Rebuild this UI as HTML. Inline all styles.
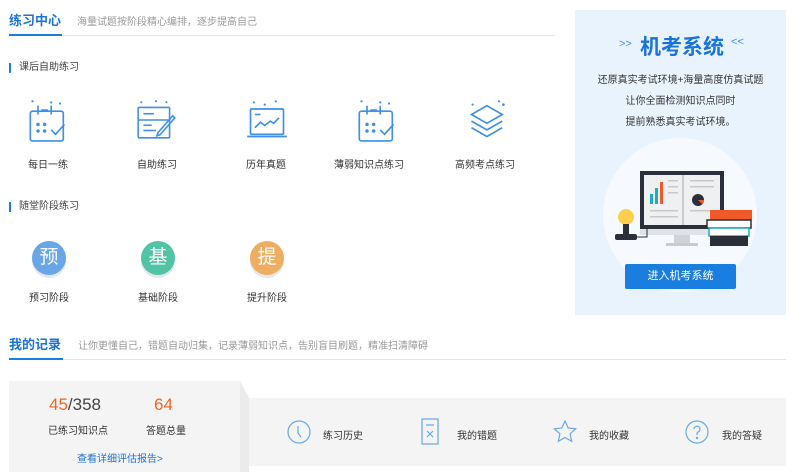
<!DOCTYPE html>
<html><head><meta charset="utf-8"><style>
*{margin:0;padding:0;box-sizing:border-box}
body{width:800px;height:472px;background:#fff;font-family:"Liberation Sans","Noto Sans CJK SC",sans-serif;position:relative;overflow:hidden;color:#333}
.a{position:absolute;white-space:nowrap}
.t{font-size:13px;font-weight:bold;color:#1a73d9}
.s{font-size:10px;color:#999}
.sec{font-size:10px;color:#444;padding-left:8px;border-left:2px solid #1a7de0;line-height:10px}
.lab{font-size:10px;color:#333;text-align:center;width:100px}
.circ{width:34px;height:34px;border-radius:50%;color:#fff;font-size:19px;text-align:center;line-height:34px;box-shadow:0 3px 0 #e4e8ee}
</style></head><body>
<div class="a t" style="left:9px;top:10px">练习中心</div>
<div class="a s" style="left:77px;top:13px">海量试题按阶段精心编排，逐步提高自己</div>
<div class="a" style="left:9px;top:35px;width:546px;height:1px;background:#e3e3e3"></div>
<div class="a" style="left:9px;top:34px;width:53px;height:2px;background:#1a7de0"></div>
<div class="a sec" style="left:9px;top:63px">课后自助练习</div>

<svg class="a" style="left:27px;top:98px" width="44" height="44" viewBox="0 0 40 40" fill="none" stroke="#3d8fe8" stroke-width="1.5">
<rect x="3" y="12" width="30" height="27" rx="2"/><line x1="10" y1="7" x2="10" y2="15"/><line x1="22" y1="7" x2="22" y2="15"/><line x1="13" y1="11" x2="19" y2="11"/>
<g fill="#3d8fe8" stroke="none"><circle cx="10" cy="24" r="1.6"/><circle cx="16" cy="24" r="1.6"/><circle cx="10" cy="30" r="1.6"/><circle cx="16" cy="30" r="1.6"/><circle cx="5" cy="3" r="1"/><circle cx="22" cy="4" r="1"/><circle cx="30" cy="5" r="1"/></g>
<path d="M22 29l4 4 8-9"/></svg>
<svg class="a" style="left:135px;top:98px" width="44" height="44" viewBox="0 0 42 40" fill="none" stroke="#3d8fe8" stroke-width="1.5">
<rect x="3" y="8" width="30" height="29" rx="1"/><line x1="3" y1="20" x2="33" y2="20"/><line x1="8" y1="14" x2="18" y2="14"/><line x1="8" y1="25" x2="16" y2="25"/><line x1="8" y1="30" x2="20" y2="30"/><path d="M22 32l14-16 2 2-14 16-3 1z"/>
<g fill="#3d8fe8" stroke="none"><circle cx="6" cy="3" r="1"/><circle cx="20" cy="2" r="1"/><circle cx="30" cy="3" r="1"/></g></svg>
<svg class="a" style="left:245px;top:98px" width="44" height="44" viewBox="0 0 40 40" fill="none" stroke="#3d8fe8" stroke-width="1.5">
<rect x="5" y="10" width="30" height="23" rx="1"/><path d="M2 35h36"/><path d="M9 27l5-5 4 3 5-4 3 2 5-5"/><line x1="9" y1="15" x2="14" y2="15"/>
<g fill="#3d8fe8" stroke="none"><circle cx="8" cy="4" r="1"/><circle cx="18" cy="6" r="1"/><circle cx="28" cy="3" r="1"/></g></svg>
<svg class="a" style="left:356px;top:98px" width="44" height="44" viewBox="0 0 40 40" fill="none" stroke="#3d8fe8" stroke-width="1.5">
<rect x="3" y="12" width="30" height="27" rx="2"/><line x1="10" y1="7" x2="10" y2="15"/><line x1="22" y1="7" x2="22" y2="15"/><line x1="13" y1="11" x2="19" y2="11"/>
<g fill="#3d8fe8" stroke="none"><circle cx="10" cy="24" r="1.6"/><circle cx="16" cy="24" r="1.6"/><circle cx="10" cy="30" r="1.6"/><circle cx="16" cy="30" r="1.6"/><circle cx="5" cy="3" r="1"/><circle cx="22" cy="4" r="1"/><circle cx="30" cy="5" r="1"/></g>
<path d="M22 29l4 4 8-9"/></svg>
<svg class="a" style="left:466px;top:98px" width="44" height="44" viewBox="0 0 40 40" fill="none" stroke="#3d8fe8" stroke-width="1.5">
<path d="M19 7l14 8-14 8-14-8z"/><path d="M5 21l14 8 14-8"/><path d="M5 27l14 8 14-8"/>
<g fill="#3d8fe8" stroke="none"><circle cx="6" cy="6" r="1"/><circle cx="30" cy="3" r="1"/><circle cx="34" cy="6" r="1.2"/></g></svg>

<div class="a lab" style="left:-2px;top:156px">每日一练</div>
<div class="a lab" style="left:107px;top:156px">自助练习</div>
<div class="a lab" style="left:216px;top:156px">历年真题</div>
<div class="a lab" style="left:319px;top:156px">薄弱知识点练习</div>
<div class="a lab" style="left:435px;top:156px">高频考点练习</div>

<div class="a sec" style="left:9px;top:202px">随堂阶段练习</div>
<div class="a circ" style="left:32px;top:241px;background:#69a6e8">预</div>
<div class="a circ" style="left:141px;top:241px;background:#52c4a5">基</div>
<div class="a circ" style="left:250px;top:241px;background:#eeae62">提</div>
<div class="a lab" style="left:-1px;top:289px">预习阶段</div>
<div class="a lab" style="left:108px;top:289px">基础阶段</div>
<div class="a lab" style="left:217px;top:289px">提升阶段</div>

<div class="a" style="left:575px;top:10px;width:211px;height:305px;background:#e8f3fd"></div>
<div class="a" style="left:603px;top:138px;width:154px;height:154px;border-radius:50%;background:#f6fafe"></div>
<div class="a" style="left:619px;top:38px;font-size:11px;color:#3d8fe8">&gt;&gt;</div>
<div class="a" style="left:640px;top:31px;font-size:21px;font-weight:bold;color:#1a73d9">机考系统</div>
<div class="a" style="left:731px;top:36px;font-size:11px;color:#3d8fe8">&lt;&lt;</div>
<div class="a" style="left:575px;top:70px;width:211px;text-align:center;font-size:10px;color:#333;line-height:21px">还原真实考试环境+海量高度仿真试题<br>让你全面检测知识点同时<br>提前熟悉真实考试环境。</div>
<svg class="a" style="left:610px;top:170px" width="150" height="80" viewBox="0 0 150 80">
<rect x="30" y="1" width="84" height="58" fill="#2a2f3a"/><rect x="34" y="5" width="76" height="50" fill="#eef0f2"/><rect x="72" y="5" width="2" height="50" fill="#ccc"/>
<rect x="40" y="24" width="3" height="10" fill="#18b0c0"/><rect x="45" y="18" width="3" height="16" fill="#18b0c0"/><rect x="50" y="12" width="3" height="22" fill="#f05a28"/>
<g fill="#c8c8c8"><rect x="58" y="10" width="10" height="1.5"/><rect x="58" y="16" width="10" height="1.5"/><rect x="58" y="22" width="10" height="1.5"/><rect x="40" y="40" width="28" height="1.5"/><rect x="40" y="46" width="28" height="1.5"/><rect x="80" y="10" width="24" height="1.5"/><rect x="80" y="16" width="24" height="1.5"/><rect x="80" y="40" width="24" height="1.5"/></g>
<circle cx="88" cy="30" r="6" fill="#2a2f3a"/><path d="M88 30h6a6 6 0 0 1-2 4z" fill="#f05a28"/>
<rect x="30" y="59" width="84" height="6" fill="#dfe2e6"/><rect x="64" y="65" width="16" height="8" fill="#d0d4d8"/><rect x="56" y="73" width="32" height="3" fill="#c8ccd0"/>
<rect x="100" y="40" width="42" height="10" fill="#f05a28"/><rect x="97" y="50" width="44" height="8" fill="#fff" stroke="#2a2f3a" stroke-width="1.5"/><rect x="99" y="58" width="40" height="8" fill="#fff" stroke="#18b0c0" stroke-width="1.5"/><rect x="100" y="66" width="38" height="10" fill="#2a2f3a"/>
<circle cx="16" cy="47" r="8" fill="#fcd04e"/><rect x="13" y="54" width="6" height="10" fill="#2a2f3a"/><rect x="5" y="64" width="22" height="6" rx="2" fill="#2a2f3a"/><path d="M27 67h10v-8" stroke="#2a2f3a" fill="none"/>
</svg>
<div class="a" style="left:625px;top:264px;width:111px;height:25px;background:#1a7de0;color:#fff;font-size:11px;text-align:center;line-height:25px;border-radius:2px">进入机考系统</div>

<div class="a t" style="left:9px;top:334px">我的记录</div>
<div class="a s" style="left:78px;top:337px">让你更懂自己，错题自动归集，记录薄弱知识点，告别盲目刷题，精准扫清障碍</div>
<div class="a" style="left:9px;top:359px;width:777px;height:1px;background:#e3e3e3"></div>
<div class="a" style="left:9px;top:358px;width:54px;height:2px;background:#1a7de0"></div>

<div class="a" style="left:243px;top:398px;width:543px;height:68px;background:#f4f4f4"></div>
<div class="a" style="left:9px;top:381px;width:240px;height:91px;background:#ebebeb;clip-path:polygon(0 0,231px 0,240px 17px,240px 100%,0 100%)"></div>
<div class="a" style="left:9px;top:381px;width:231px;height:91px;background:#f4f4f4"></div>
<div class="a" style="left:49px;top:395px;font-size:17px;color:#444"><span style="color:#f26522">45</span>/358</div>
<div class="a" style="left:154px;top:395px;font-size:17px;color:#f26522">64</div>
<div class="a" style="left:48px;top:422px;font-size:10px">已练习知识点</div>
<div class="a" style="left:146px;top:422px;font-size:10px">答题总量</div>
<div class="a" style="left:77px;top:450px;font-size:10px;color:#1a73d9">查看详细评估报告&gt;</div>

<svg class="a" style="left:287px;top:420px" width="24" height="24" viewBox="0 0 24 24" fill="none" stroke="#6aa8ea" stroke-width="1.2"><circle cx="12" cy="12" r="11"/><path d="M11 6v7l3 4"/></svg>
<div class="a" style="left:323px;top:427px;font-size:10px">练习历史</div>
<svg class="a" style="left:421px;top:418px" width="20" height="28" viewBox="0 0 20 28" fill="none" stroke="#6aa8ea" stroke-width="1.2"><rect x="1" y="1" width="16" height="25"/><path d="M5 7h8M6 13l6 6M12 13l-6 6"/></svg>
<div class="a" style="left:457px;top:427px;font-size:10px">我的错题</div>
<svg class="a" style="left:553px;top:420px" width="24" height="24" viewBox="0 0 24 24" fill="none" stroke="#6aa8ea" stroke-width="1.2"><path d="M12 1l3.2 7 7.5.8-5.6 5 1.6 7.5L12 17.5 5.3 21.3l1.6-7.5-5.6-5 7.5-.8z"/></svg>
<div class="a" style="left:589px;top:427px;font-size:10px">我的收藏</div>
<svg class="a" style="left:685px;top:420px" width="24" height="24" viewBox="0 0 24 24" fill="none" stroke="#6aa8ea" stroke-width="1.2"><circle cx="12" cy="12" r="11"/><path d="M9 9a3 3 0 1 1 4 3c-1 .5-1 1-1 3"/><circle cx="12" cy="18" r=".6" fill="#6aa8ea"/></svg>
<div class="a" style="left:722px;top:427px;font-size:10px">我的答疑</div>
</body></html>
